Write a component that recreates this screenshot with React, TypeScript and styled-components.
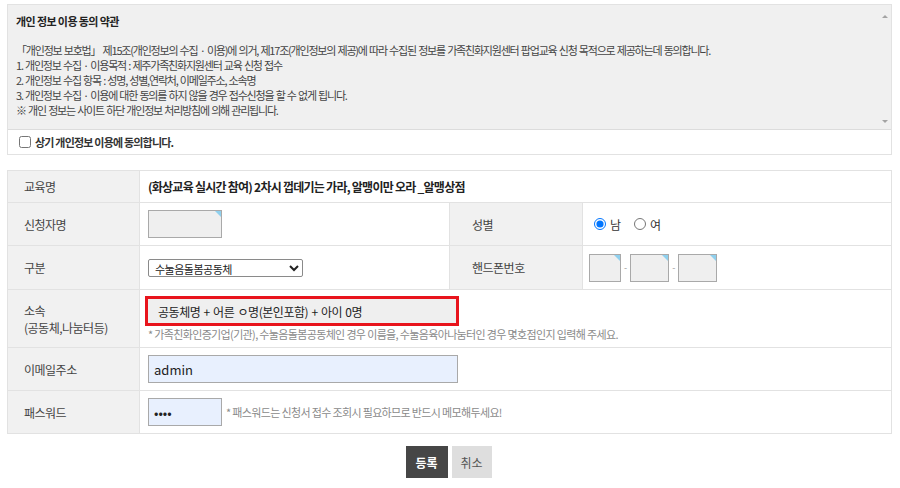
import React from 'react'
import styled, { createGlobalStyle } from 'styled-components'

const GlobalStyle = createGlobalStyle`
  body {
    margin: 0;
    background: #fff;
    font-family: "Noto Sans CJK KR", "Noto Sans", sans-serif;
    color: #333;
  }
`

const Page = styled.div`
  width: 885px;
  padding: 4px 0 0 7px;
`

const AgreeBox = styled.div`
  border: 1px solid #e2e2e2;
`

const TermsArea = styled.div`
  display: flex;
  height: 124px;
  background: #f0f0f0;
  border-bottom: 1px solid #dcdcdc;
`

const TermsBody = styled.div`
  flex: 1;
  padding: 9px 0 0 8px;
  font-size: 11px;
  line-height: 15px;
  color: #444;
  letter-spacing: -1.2px;
  word-spacing: 1px;
`

const TermsTitle = styled.div`
  font-weight: 700;
  font-size: 11px;
  color: #222;
  letter-spacing: -0.6px;
  word-spacing: 0;
  margin-bottom: 14px;
`

const ScrollRail = styled.div`
  width: 13px;
  display: flex;
  flex-direction: column;
  justify-content: space-between;
  align-items: center;
  padding: 10px 0 6px;
`

const Arrow = styled.span<{ $down?: boolean }>`
  width: 0;
  height: 0;
  border-left: 3px solid transparent;
  border-right: 3px solid transparent;
  ${(p) => (p.$down ? 'border-top: 3px solid #a3a3a3;' : 'border-bottom: 3px solid #a3a3a3;')}
`

const AgreeRow = styled.label`
  display: flex;
  align-items: center;
  height: 24px;
  padding-left: 8px;
  font-size: 11px;
  font-weight: 700;
  color: #333;
  letter-spacing: -0.8px;
  input {
    margin: 0 4px 0 3px;
    width: 12px;
    height: 12px;
  }
`

const FormTable = styled.table`
  width: 100%;
  margin-top: 15px;
  border-collapse: collapse;
  table-layout: fixed;
  border: 1px solid #e2e2e2;
`

const Row = styled.tr<{ $h: number }>`
  height: ${(p) => p.$h}px;
`

const LabelCell = styled.th<{ $pad?: number }>`
  background: #f1f1f1;
  border: 1px solid #e2e2e2;
  text-align: left;
  font-weight: 400;
  font-size: 12px;
  line-height: 17px;
  color: #444;
  padding: 0 0 0 ${(p) => p.$pad ?? 16}px;
  letter-spacing: -0.5px;
`

const ValueCell = styled.td`
  border: 1px solid #e2e2e2;
  padding: 0 0 0 8px;
  font-size: 12px;
  color: #333;
`

const CourseTitle = styled.span`
  font-weight: 700;
  font-size: 12px;
  color: #222;
  letter-spacing: -0.75px;
`

const FieldBox = styled.span`
  position: relative;
  display: inline-block;
  vertical-align: middle;
  &::after {
    content: '';
    position: absolute;
    top: 1px;
    right: 1px;
    border-top: 6px solid #8fd0ee;
    border-left: 6px solid transparent;
  }
`

const GrayInput = styled.input<{ $w: number }>`
  display: block;
  box-sizing: border-box;
  width: ${(p) => p.$w}px;
  height: 28px;
  margin: 0;
  border: 1px solid #a9a9a9;
  background: #efefef;
  outline: none;
`

const Select = styled.select`
  box-sizing: border-box;
  width: 155px;
  height: 18px;
  padding: 0 2px;
  border: 1px solid #8a8a8a;
  border-radius: 2px;
  background: #fff;
  font-family: inherit;
  font-size: 11px;
  color: #222;
  letter-spacing: -0.5px;
  vertical-align: middle;
`

const RadioGroup = styled.div`
  display: flex;
  align-items: center;
  gap: 13px;
  padding-left: 3px;
  font-size: 12px;
  color: #333;
  label {
    display: flex;
    align-items: center;
    gap: 4px;
  }
  input {
    margin: 0;
    width: 12px;
    height: 12px;
  }
`

const PhoneRow = styled.div`
  display: flex;
  align-items: center;
  gap: 3px;
  margin-left: -2px;
`

const Dash = styled.span`
  font-size: 9px;
  color: #999;
`

const RedInput = styled.input`
  display: block;
  box-sizing: border-box;
  width: 314px;
  height: 30px;
  margin: 0 0 0 -3px;
  padding: 0 0 0 10px;
  border: 3px solid #e8141c;
  background: #efefef;
  font-family: inherit;
  font-size: 12px;
  color: #222;
  letter-spacing: -0.45px;
  word-spacing: 1px;
  outline: none;
`

const Note = styled.span`
  font-size: 11px;
  color: #8a8a8a;
  letter-spacing: -0.65px;
  white-space: nowrap;
`

const StackCell = styled.div`
  display: flex;
  flex-direction: column;
  padding-top: 1px;
`

const BlueInput = styled.input<{ $w: number }>`
  box-sizing: border-box;
  width: ${(p) => p.$w}px;
  height: 28px;
  margin: 0;
  padding: 0 0 0 5px;
  border: 1px solid #a9a9a9;
  background: #e8f0fe;
  font-family: inherit;
  font-size: 13px;
  color: #222;
  outline: none;
  vertical-align: middle;
`

const InlineRow = styled.div`
  display: flex;
  align-items: center;
  gap: 4px;
`

const ButtonBar = styled.div`
  display: flex;
  justify-content: center;
  gap: 4px;
  margin-top: 12px;
  padding-right: 2px;
`

const Btn = styled.button<{ $primary?: boolean }>`
  width: ${(p) => (p.$primary ? 42 : 40)}px;
  height: 32px;
  border: none;
  border-radius: 0;
  background: ${(p) => (p.$primary ? '#464646' : '#dedede')};
  color: ${(p) => (p.$primary ? '#fff' : '#555')};
  font-family: inherit;
  font-size: 12px;
  font-weight: ${(p) => (p.$primary ? 700 : 400)};
  padding: 0;
`

export default function App() {
  return (
    <Page>
      <GlobalStyle />
      <AgreeBox>
        <TermsArea>
          <TermsBody>
            <TermsTitle>개인 정보 이용 동의 약관</TermsTitle>
            <div>「개인정보 보호법」 제15조(개인정보의 수집 · 이용)에 의거, 제17조(개인정보의 제공)에 따라 수집된 정보를 가족친화지원센터 팝업교육 신청 목적으로 제공하는데 동의합니다.</div>
            <div>1. 개인정보 수집 · 이용목적 : 제주가족친화지원센터 교육 신청 접수</div>
            <div>2. 개인정보 수집 항목 : 성명, 성별,연락처, 이메일주소, 소속명</div>
            <div>3. 개인정보 수집 · 이용에 대한 동의를 하지 않을 경우 접수신청을 할 수 없게 됩니다.</div>
            <div>※ 개인 정보는 사이트 하단 개인정보 처리방침에 의해 관리됩니다.</div>
          </TermsBody>
          <ScrollRail>
            <Arrow />
            <Arrow $down />
          </ScrollRail>
        </TermsArea>
        <AgreeRow>
          <input type="checkbox" />
          상기 개인정보 이용에 동의합니다.
        </AgreeRow>
      </AgreeBox>

      <FormTable>
        <colgroup>
          <col style={{ width: 132 }} />
          <col style={{ width: 310 }} />
          <col style={{ width: 133 }} />
          <col />
        </colgroup>
        <tbody>
          <Row $h={32}>
            <LabelCell>교육명</LabelCell>
            <ValueCell colSpan={3}>
              <CourseTitle>(화상교육 실시간 참여) 2차시 껍데기는 가라, 알맹이만 오라 _알맹상점</CourseTitle>
            </ValueCell>
          </Row>
          <Row $h={43}>
            <LabelCell>신청자명</LabelCell>
            <ValueCell>
              <FieldBox>
                <GrayInput $w={74} />
              </FieldBox>
            </ValueCell>
            <LabelCell $pad={22}>성별</LabelCell>
            <ValueCell>
              <RadioGroup>
                <label>
                  <input type="radio" name="gender" defaultChecked />남
                </label>
                <label>
                  <input type="radio" name="gender" />여
                </label>
              </RadioGroup>
            </ValueCell>
          </Row>
          <Row $h={44}>
            <LabelCell>구분</LabelCell>
            <ValueCell>
              <Select defaultValue="수눌음돌봄공동체">
                <option>수눌음돌봄공동체</option>
                <option>수눌음육아나눔터</option>
                <option>가족친화인증기업(기관)</option>
              </Select>
            </ValueCell>
            <LabelCell $pad={22}>핸드폰번호</LabelCell>
            <ValueCell>
              <PhoneRow>
                <FieldBox>
                  <GrayInput $w={32} />
                </FieldBox>
                <Dash>-</Dash>
                <FieldBox>
                  <GrayInput $w={39} />
                </FieldBox>
                <Dash>-</Dash>
                <FieldBox>
                  <GrayInput $w={39} />
                </FieldBox>
              </PhoneRow>
            </ValueCell>
          </Row>
          <Row $h={58}>
            <LabelCell>
              소속
              <br />
              (공동체,나눔터등)
            </LabelCell>
            <ValueCell colSpan={3}>
              <StackCell>
                <RedInput defaultValue="공동체명 + 어른 ㅇ명(본인포함) + 아이 0명" />
                <Note>* 가족친화인증기업(기관), 수눌음돌봄공동체인 경우 이름을, 수눌음육아나눔터인 경우 몇호점인지 입력해 주세요.</Note>
              </StackCell>
            </ValueCell>
          </Row>
          <Row $h={43}>
            <LabelCell>이메일주소</LabelCell>
            <ValueCell colSpan={3}>
              <BlueInput $w={310} defaultValue="admin" />
            </ValueCell>
          </Row>
          <Row $h={43}>
            <LabelCell>패스워드</LabelCell>
            <ValueCell colSpan={3}>
              <InlineRow>
                <BlueInput $w={74} type="password" defaultValue="1234" />
                <Note>* 패스워드는 신청서 접수 조회시 필요하므로 반드시 메모해두세요!</Note>
              </InlineRow>
            </ValueCell>
          </Row>
        </tbody>
      </FormTable>

      <ButtonBar>
        <Btn $primary>등록</Btn>
        <Btn>취소</Btn>
      </ButtonBar>
    </Page>
  )
}
